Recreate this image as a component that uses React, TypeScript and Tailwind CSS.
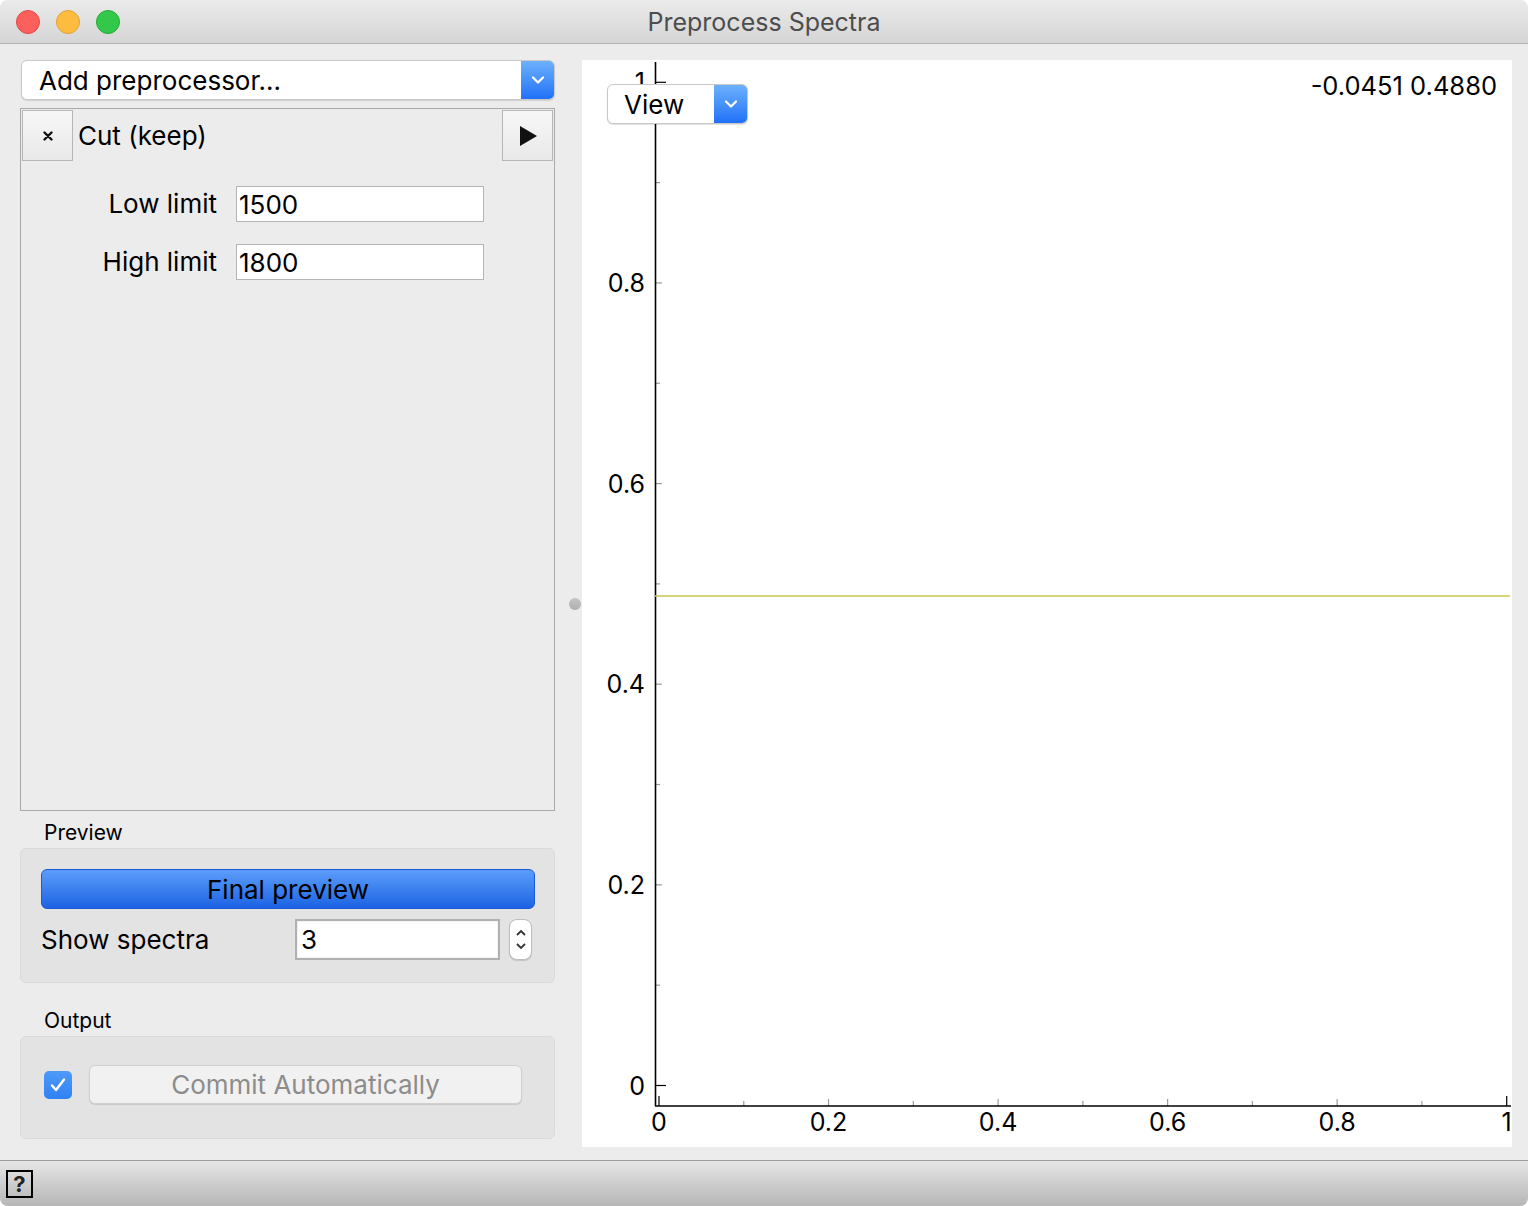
import React from 'react';

function Chevron({ className = '' }: { className?: string }) {
  return (
    <svg viewBox="0 0 14 10" className={className} fill="none">
      <path d="M2 2.5 L7 7.5 L12 2.5" stroke="white" strokeWidth="2.2" strokeLinecap="round" strokeLinejoin="round" />
    </svg>
  );
}

function Combo({ label, width, textPad }: { label: string; width: string; textPad: string }) {
  return (
    <div className={`${width} h-[40px] flex rounded-[6px] bg-white border border-[#c8c8c8] shadow-[0_1px_1px_rgba(0,0,0,0.12)] overflow-hidden`}>
      <div className={`flex-1 flex items-center ${textPad} text-[26px] text-black`}>{label}</div>
      <div className="w-[33px] flex items-center justify-center bg-gradient-to-b from-[#6db0fb] to-[#1f70f7]">
        <Chevron className="w-[14px] h-[10px]" />
      </div>
    </div>
  );
}

const yv = (v: number) => 1025.5 - 1003.2 * v;
const xu = (u: number) => 77 + 847.7 * u;

function Plot() {
  const steps = [0, 0.1, 0.2, 0.3, 0.4, 0.5, 0.6, 0.7, 0.8, 0.9, 1];
  const labels = ['0', '0.2', '0.4', '0.6', '0.8', '1'];
  return (
    <svg width="930" height="1087" className="absolute inset-0" fontFamily="Inter, 'Liberation Sans', sans-serif">
      {/* y ticks */}
      {steps.map((v, i) => {
        const end = i === 0 || i === 10;
        const major = i % 2 === 0;
        const len = end ? 11 : major ? 7 : 5;
        return (
          <line key={'y' + i} x1={73} x2={73 + len} y1={yv(v)} y2={yv(v)} stroke={end ? '#000' : '#9a9a9a'} strokeWidth={1.2} />
        );
      })}
      {/* x ticks */}
      {steps.map((u, i) => {
        const end = i === 0 || i === 10;
        const major = i % 2 === 0;
        const len = end ? 10 : major ? 7 : 5;
        return (
          <line key={'x' + i} x1={xu(u)} x2={xu(u)} y1={1046} y2={1046 - len} stroke={end ? '#000' : '#9a9a9a'} strokeWidth={1.2} />
        );
      })}
      <line x1={73.5} x2={73.5} y1={2} y2={1046} stroke="#000" strokeWidth={1.6} />
      <line x1={73} x2={929} y1={1046} y2={1046} stroke="#000" strokeWidth={1.6} />
      <line x1={73} x2={928} y1={536} y2={536} stroke="#c8c94a" strokeWidth={1.4} />
      {labels.map((t, i) => (
        <text key={'yl' + t} x={63} y={yv(i * 0.2) + 9} textAnchor="end" fontSize={25} fill="#000">{t}</text>
      ))}
      {labels.map((t, i) => (
        <text key={'xl' + t} x={xu(i * 0.2)} y={1071} textAnchor="middle" fontSize={25} fill="#000">{t}</text>
      ))}
    </svg>
  );
}

export default function App() {
  return (
    <div className="w-[1528px] h-[1206px] bg-white font-[Inter,'Liberation_Sans',sans-serif]">
      <div className="w-full h-full flex flex-col bg-[#ececec] rounded-[8px] overflow-hidden">
        {/* Title bar */}
        <div className="h-[44px] relative flex items-center justify-center pt-[3px] border-b border-[#b4b4b4] bg-gradient-to-b from-[#ebebeb] to-[#d5d5d5]">
          <div className="absolute left-[16px] top-[10px] flex gap-[16px]">
            <span className="w-[24px] h-[24px] rounded-full bg-[#fc605c] border border-[#de4b45]" />
            <span className="w-[24px] h-[24px] rounded-full bg-[#fdbc40] border border-[#dea236]" />
            <span className="w-[24px] h-[24px] rounded-full bg-[#34c84a] border border-[#26a934]" />
          </div>
          <span className="text-[25px] text-[#4d4d4d]">Preprocess Spectra</span>
        </div>

        {/* Main */}
        <div className="h-[1116px] flex pt-[16px] pb-[13px] pl-[20px] pr-[16px]">
          {/* Left column */}
          <div className="w-[535px] flex flex-col">
            <div className="pl-[1px]">
              <Combo label="Add preprocessor..." width="w-[534px]" textPad="pl-[17px]" />
            </div>

            <div className="mt-[8px] h-[703px] border border-[#a9a9a9]">
              <div className="flex p-[1px] items-center">
                <button className="w-[51px] h-[51px] flex items-center justify-center border border-[#b6b6b6] bg-gradient-to-b from-[#f7f7f7] to-[#e9e9e9]">
                  <svg width="10" height="10" viewBox="0 0 10 10">
                    <path d="M1.5 1.5 L8.5 8.5 M8.5 1.5 L1.5 8.5" stroke="#111" strokeWidth="2.4" strokeLinecap="round" />
                  </svg>
                </button>
                <span className="flex-1 pl-[5px] text-[26px] text-black">Cut (keep)</span>
                <button className="w-[51px] h-[51px] flex items-center justify-center border border-[#b6b6b6] bg-gradient-to-b from-[#f7f7f7] to-[#e9e9e9]">
                  <svg width="18" height="20" viewBox="0 0 18 20">
                    <path d="M1 0 L18 10 L1 20 Z" fill="#111" />
                  </svg>
                </button>
              </div>
              <div className="grid grid-cols-[196px_248px] gap-x-[19px] gap-y-[22px] pt-[24px] items-center">
                <span className="text-right text-[26px] leading-[36px] text-black">Low limit</span>
                <div className="h-[36px] bg-white border border-[#b5b5b5] flex items-center pl-[2px] text-[26px] text-black">1500</div>
                <span className="text-right text-[26px] leading-[36px] text-black">High limit</span>
                <div className="h-[36px] bg-white border border-[#b5b5b5] flex items-center pl-[2px] text-[26px] text-black">1800</div>
              </div>
            </div>

            <div className="h-[37px] pt-[10px] pl-[24px] leading-[24px] text-[21px] text-black">Preview</div>
            <div className="h-[135px] rounded-[6px] bg-[#e3e3e3] border border-[#dadada] pt-[20px] pl-[20px] pr-[19px]">
              <button className="w-[494px] h-[40px] rounded-[6px] border border-[#1b5ad6] bg-gradient-to-b from-[#5c9dfa] to-[#1b62e3] text-[26px] text-black">
                Final preview
              </button>
              <div className="mt-[10px] h-[41px] flex items-center">
                <span className="w-[254px] text-[26px] text-black">Show spectra</span>
                <div className="w-[205px] h-[41px] bg-white border-2 border-[#b0b0b0] shadow-[inset_0_0_0_1px_#f4f4f4] flex items-center pl-[4px] text-[26px] text-black">3</div>
                <div className="ml-[9px] w-[23px] h-[41px] rounded-[8px] bg-white border border-[#bdbdbd] shadow-[0_1px_1px_rgba(0,0,0,0.15)] flex flex-col items-center justify-center gap-[5px]">
                  <svg width="12" height="8" viewBox="0 0 12 8"><path d="M2 6 L6 2 L10 6" stroke="#333" strokeWidth="1.8" fill="none" /></svg>
                  <svg width="12" height="8" viewBox="0 0 12 8"><path d="M2 2 L6 6 L10 2" stroke="#333" strokeWidth="1.8" fill="none" /></svg>
                </div>
              </div>
            </div>

            <div className="h-[53px] pt-[26px] pl-[24px] leading-[24px] text-[21px] text-black">Output</div>
            <div className="h-[103px] rounded-[6px] bg-[#e3e3e3] border border-[#dadada] pt-[28px] pl-[23px]">
              <div className="h-[39px] flex items-center">
                <div className="w-[28px] h-[28px] rounded-[5px] bg-gradient-to-b from-[#4f9af8] to-[#2f80f4] flex items-center justify-center">
                  <svg width="18" height="16" viewBox="0 0 18 16">
                    <path d="M3 8.5 L7 13 L15 2.5" stroke="white" strokeWidth="2.4" fill="none" strokeLinecap="round" strokeLinejoin="round" />
                  </svg>
                </div>
                <div className="ml-[17px] w-[433px] h-[39px] rounded-[6px] bg-[#f1f1f1] border border-[#d0d0d0] shadow-[0_1px_1px_rgba(0,0,0,0.12)] flex items-center justify-center text-[26px] text-[#8c8c8c]">
                  Commit Automatically
                </div>
              </div>
            </div>
          </div>

          {/* Splitter */}
          <div className="w-[27px] flex items-center justify-end pr-[1px]">
            <span className="w-[12px] h-[12px] rounded-full bg-gradient-to-b from-[#c4c4c4] to-[#b0b0b0]" />
          </div>

          {/* Plot */}
          <div className="w-[930px] h-[1087px] relative bg-white">
            <Plot />
            <div className="absolute left-[25px] top-[24px]">
              <Combo label="View" width="w-[141px]" textPad="pl-[16px]" />
            </div>
            <div className="absolute right-[15px] top-[12px] leading-[28px] text-[25.5px] text-black">-0.0451 0.4880</div>
          </div>
        </div>

        {/* Bottom bar */}
        <div className="flex-1 border-t border-[#9c9c9c] bg-gradient-to-b from-[#e6e6e6] to-[#b6b6b6] flex items-center pl-[6px]">
          <div className="w-[27px] h-[28px] border-2 border-black flex items-center justify-center text-[22px] font-bold text-[#222] leading-none">?</div>
        </div>
      </div>
    </div>
  );
}
